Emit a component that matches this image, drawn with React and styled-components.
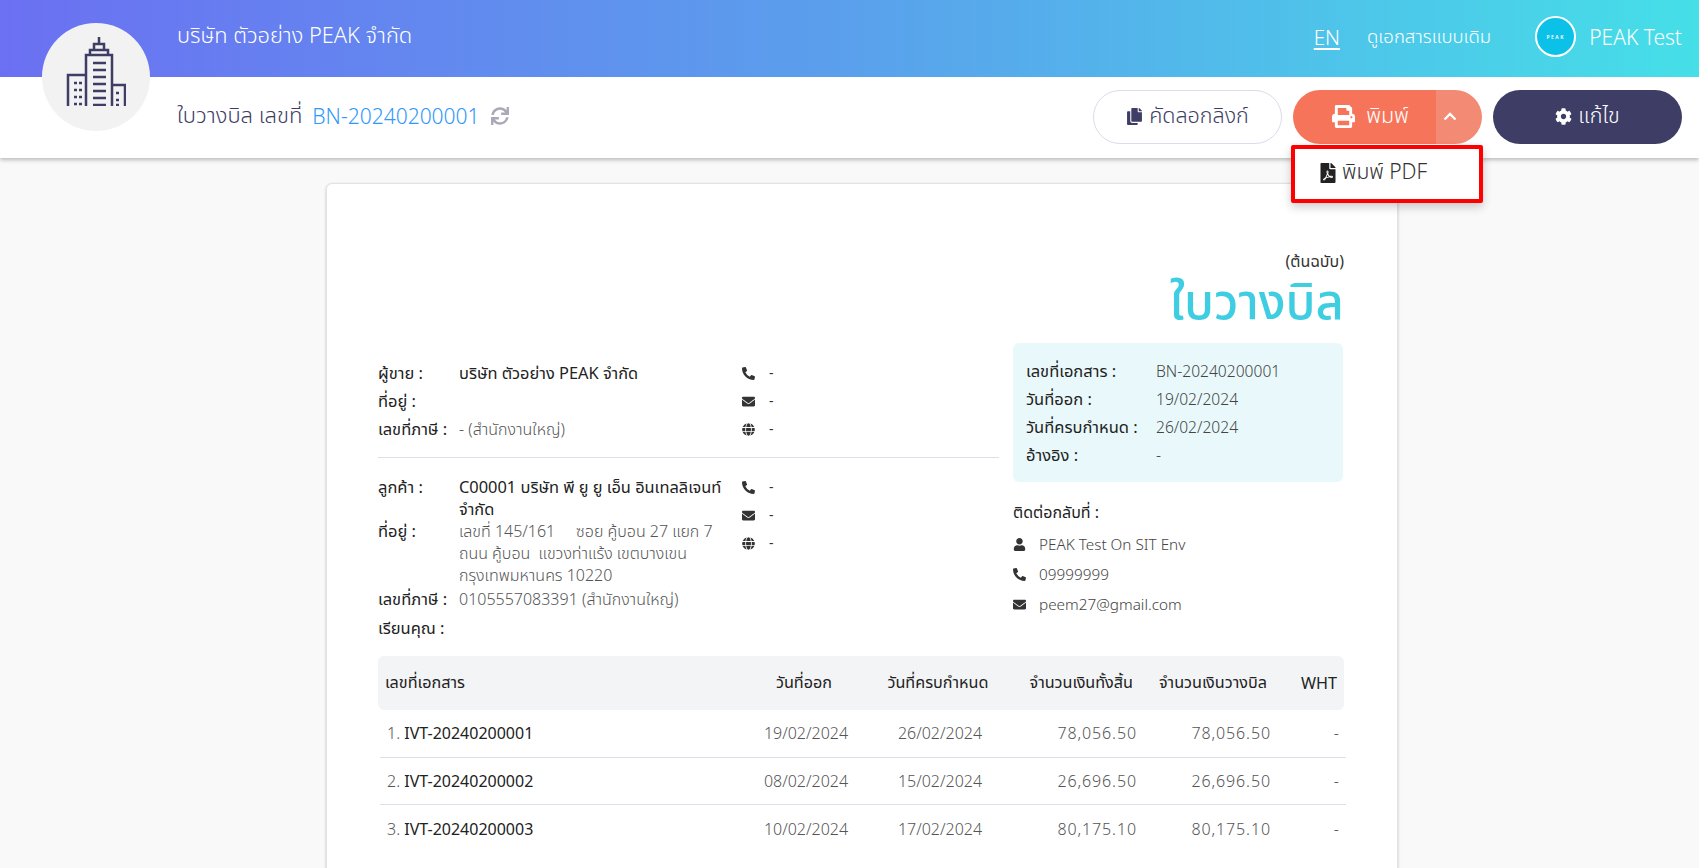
import React from "react";
import styled, { createGlobalStyle } from "styled-components";
import {
  FaCog,
  FaCopy,
  FaEnvelope,
  FaFilePdf,
  FaGlobe,
  FaPhoneAlt,
  FaPrint,
  FaSync,
  FaUser,
} from "react-icons/fa";

const GlobalStyle = createGlobalStyle`
  html, body {
    margin: 0;
    height: 100%;
    overflow: hidden;
    background: #f9f9f9;
    font-family: "Noto Sans", "Noto Sans Thai", "Open Sans", sans-serif;
    font-size: 16px;
    color: #333;
  }
  * { box-sizing: border-box; }
`;

const Page = styled.div`
  height: 868px;
  overflow: hidden;
`;

const Header = styled.header`
  position: relative;
  z-index: 5;
  box-shadow: 0 2px 4px rgba(0, 0, 0, 0.25);
`;

const TopBar = styled.div`
  height: 77px;
  padding: 0 17px 4px 177px;
  display: flex;
  align-items: center;
  color: #fff;
  background: linear-gradient(90deg, #6b70f2 0%, #5aa0ec 50%, #45dfe8 100%);
`;

const CompanyName = styled.div`
  flex: 1;
  font-size: 21.8px;
  font-weight: 300;
`;

const Lang = styled.a`
  font-size: 20.5px;
  font-weight: 300;
  text-decoration: underline;
  text-underline-offset: 3px;
  margin-right: 27px;
`;

const OldDoc = styled.a`
  font-size: 18.5px;
  font-weight: 300;
  margin-right: 44px;
`;

const Avatar = styled.div`
  width: 41px;
  height: 41px;
  border-radius: 50%;
  border: 2px solid #fff;
  background: #0cc1e8;
  display: flex;
  align-items: center;
  justify-content: center;
  font-size: 5px;
  letter-spacing: 1.5px;
  font-weight: 600;
  margin-right: 13px;
`;

const UserName = styled.div`
  font-size: 21px;
  font-weight: 300;
`;

const Logo = styled.div`
  position: absolute;
  left: 42px;
  top: 23px;
  width: 108px;
  height: 108px;
  border-radius: 50%;
  background: #f2f2f2;
  display: flex;
  align-items: center;
  justify-content: center;
  padding-bottom: 11px;
`;

const SubBar = styled.div`
  height: 81px;
  padding: 0 17px 2px 177px;
  display: flex;
  align-items: center;
  gap: 11px;
  background: #fff;
`;

const DocTitle = styled.div`
  flex: 1;
  display: flex;
  align-items: center;
  font-size: 22px;
  font-weight: 300;
  color: #3d3d66;
  padding-bottom: 2px;
`;

const DocNumber = styled.span`
  font-size: 21px;
  color: #2f98fb;
  margin: 0 11px 0 10px;
`;

const RefreshIcon = styled(FaSync)`
  color: #a9a9b8;
  font-size: 18px;
`;

const PillButton = styled.button`
  width: 189px;
  height: 54px;
  border-radius: 27px;
  border: 1px solid ${(p) => (p.$outline ? "#dcdcea" : "transparent")};
  background: ${(p) => (p.$outline ? "#fff" : "#3d3d66")};
  color: ${(p) => (p.$outline ? "#3d3d66" : "#fff")};
  font: inherit;
  font-size: 21.5px;
  font-weight: 300;
  display: flex;
  align-items: center;
  justify-content: center;
  gap: 6px;
  padding: 0;
`;

const PrintWrap = styled.div`
  position: relative;
  width: 189px;
  height: 54px;
  display: flex;
  border-radius: 27px;
  color: #fff;
  font-size: 21.5px;
  font-weight: 300;
`;

const PrintMain = styled.div`
  flex: 1;
  display: flex;
  align-items: center;
  justify-content: center;
  gap: 11px;
  background: #f6755a;
  border-radius: 27px 0 0 27px;
  padding-left: 12px;
`;

const PrintToggle = styled.div`
  width: 46px;
  display: flex;
  align-items: center;
  justify-content: center;
  background: #f38a74;
  border-radius: 0 27px 27px 0;
  padding-right: 23px;
  padding-left: 4px;
`;

const Dropdown = styled.div`
  position: absolute;
  left: -2px;
  top: 55px;
  width: 192px;
  height: 58px;
  border: 4px solid #f00;
  border-radius: 2px;
  background: #fff;
  box-shadow: 0 4px 10px rgba(0, 0, 0, 0.2);
  color: #333;
  font-size: 21px;
  display: flex;
  align-items: center;
  gap: 4px;
  padding: 0 0 2px 23px;
`;

const Card = styled.main`
  width: 1072px;
  margin: 25px 0 0 326px;
  padding: 0 53px 60px 51px;
  background: #fff;
  border: 1px solid #e2e2e2;
  border-radius: 6px;
  box-shadow: 0 1px 3px rgba(0, 0, 0, 0.2);
`;

const DocHead = styled.div`
  height: 159px;
  padding-top: 67px;
  text-align: right;
`;

const Original = styled.div`
  font-size: 16px;
  line-height: 20px;
`;

const BigTitle = styled.div`
  font-size: 49px;
  line-height: 58px;
  color: #3fcde2;
  font-weight: 500;
`;

const Columns = styled.div`
  display: flex;
  gap: 14px;
`;

const LeftCol = styled.div`
  width: 621px;
  padding-top: 19px;
`;

const RightCol = styled.div`
  width: 330px;
`;

const PartyBlock = styled.div`
  display: flex;
`;

const PartyInfo = styled.div`
  width: 364px;
  padding-right: 4px;
`;

const Row = styled.div`
  display: flex;
  min-height: 28px;
  line-height: 22px;
  margin-bottom: ${(p) => p.$after || 0}px;
`;

const Label = styled.div`
  flex: none;
  width: 81px;
  font-size: 16.5px;
  color: #222;
`;

const Value = styled.div`
  font-size: ${(p) => (p.$strong ? "16.4px" : "16px")};
  font-weight: ${(p) => (p.$strong ? 400 : 300)};
  color: ${(p) => (p.$strong ? "#222" : "#555")};
`;

const ContactItem = styled.div`
  display: flex;
  align-items: flex-start;
  height: 28px;
  line-height: 22px;
  font-size: 14px;
  svg {
    width: 13px;
    height: 13px;
    margin: 5px 14px 0 0;
    color: #333;
  }
`;

const Divider = styled.hr`
  border: 0;
  border-top: 1px solid #dedee8;
  margin: 11px 0 18px;
`;

const InfoBox = styled.div`
  height: 139px;
  padding: 14px 13px;
  border-radius: 6px;
  background: #e9f9fb;
`;

const InfoRow = styled.div`
  display: flex;
  height: 28px;
  line-height: 28px;
  font-size: 16.5px;
`;

const InfoLabel = styled.div`
  width: 130px;
  color: #222;
`;

const InfoValue = styled.div`
  font-size: 15.6px;
  font-weight: 300;
  color: #444;
`;

const ContactHeading = styled.div`
  margin: 19px 0 6px;
  line-height: 22px;
  font-size: 16px;
  color: #222;
`;

const PersonRow = styled.div`
  display: flex;
  align-items: center;
  height: 30px;
  font-size: 15.3px;
  font-weight: 300;
  color: #444;
  svg {
    width: 13px;
    height: 13px;
    margin-right: 13px;
    color: #333;
  }
`;

const TableGrid = styled.div`
  display: grid;
  grid-template-columns: 366px 120px 148px 125px 134px 70px;
  align-items: center;
`;

const TableHead = styled(TableGrid)`
  height: 54px;
  margin-top: 11px;
  border-radius: 6px;
  background: #f3f4f6;
  font-size: 16.2px;
  color: #222;
`;

const TableRow = styled(TableGrid)`
  height: 47.5px;
  margin: 0 -2px 0 2px;
  font-size: 16px;
  font-weight: 300;
  color: #555;
  border-bottom: ${(p) => (p.$last ? "0" : "1px solid #dedee8")};
`;

const Cell = styled.div`
  text-align: ${(p) => p.$align || "left"};
  white-space: nowrap;
  padding-right: ${(p) => (p.$align === "right" ? "4px" : "0")};
`;

const MoneyCell = styled(Cell)`
  text-align: right;
  letter-spacing: 0.9px;
  padding-right: 2px;
`;

const DocCell = styled(Cell)`
  padding-left: 7px;
`;

const DocCode = styled.span`
  color: #222;
  font-weight: 400;
`;

const BuildingIcon = () => (
  <svg width="60" height="69" viewBox="0 0 60 69" fill="none" stroke="#3d3d66" strokeWidth="2.5">
    <path d="M33 0v7M28 13V7h10v6M24 18v-5h18v5M20 69V18h26v51" />
    <path d="M27 26h13M27 33h13M27 40h13M27 47h13M27 54h13M27 61h13M27 68h13" />
    <path d="M20 38H2v31M46 48h13v21" />
    <path d="M8 46h3M13 46h3M8 53h3M13 53h3M8 60h3M13 60h3M8 67h3M13 67h3M50 56h3M50 63h3M50 68h3" />
  </svg>
);

const ContactIcons = () => (
  <div>
    <ContactItem><FaPhoneAlt />-</ContactItem>
    <ContactItem><FaEnvelope />-</ContactItem>
    <ContactItem><FaGlobe />-</ContactItem>
  </div>
);

const invoices = [
  ["1.", "IVT-20240200001", "19/02/2024", "26/02/2024", "78,056.50"],
  ["2.", "IVT-20240200002", "08/02/2024", "15/02/2024", "26,696.50"],
  ["3.", "IVT-20240200003", "10/02/2024", "17/02/2024", "80,175.10"],
];

const App = () => (
  <Page>
    <GlobalStyle />
    <Header>
      <TopBar>
        <CompanyName>บริษัท ตัวอย่าง PEAK จำกัด</CompanyName>
        <Lang>EN</Lang>
        <OldDoc>ดูเอกสารแบบเดิม</OldDoc>
        <Avatar>PEAK</Avatar>
        <UserName>PEAK Test</UserName>
      </TopBar>
      <SubBar>
        <DocTitle>
          ใบวางบิล เลขที่
          <DocNumber>BN-20240200001</DocNumber>
          <RefreshIcon />
        </DocTitle>
        <PillButton $outline>
          <FaCopy size={17} />
          คัดลอกลิงก์
        </PillButton>
        <PrintWrap>
          <PrintMain>
            <FaPrint size={23} />
            พิมพ์
          </PrintMain>
          <PrintToggle>
            <svg width="14" height="9" viewBox="0 0 14 9" fill="none" stroke="#fff" strokeWidth="2.4">
              <path d="M1.5 7.5 7 2l5.5 5.5" />
            </svg>
          </PrintToggle>
          <Dropdown>
            <FaFilePdf size={20} color="#222" />
            พิมพ์ PDF
          </Dropdown>
        </PrintWrap>
        <PillButton>
          <FaCog size={17} />
          แก้ไข
        </PillButton>
      </SubBar>
      <Logo>
        <BuildingIcon />
      </Logo>
    </Header>

    <Card>
      <DocHead>
        <Original>(ต้นฉบับ)</Original>
        <BigTitle>ใบวางบิล</BigTitle>
      </DocHead>
      <Columns>
        <LeftCol>
          <PartyBlock>
            <PartyInfo>
              <Row><Label>ผู้ขาย :</Label><Value $strong>บริษัท ตัวอย่าง PEAK จำกัด</Value></Row>
              <Row><Label>ที่อยู่ :</Label><Value /></Row>
              <Row><Label>เลขที่ภาษี :</Label><Value>- (สำนักงานใหญ่)</Value></Row>
            </PartyInfo>
            <ContactIcons />
          </PartyBlock>
          <Divider />
          <PartyBlock>
            <PartyInfo>
              <Row><Label>ลูกค้า :</Label><Value $strong>C00001 บริษัท พี ยู ยู เอ็น อินเทลลิเจนท์ จำกัด</Value></Row>
              <Row $after={2}><Label>ที่อยู่ :</Label><Value>เลขที่ 145/161 &nbsp;&nbsp;&nbsp; ซอย คู้บอน 27 แยก 7<br />ถนน คู้บอน &nbsp;แขวงท่าแร้ง เขตบางเขน<br />กรุงเทพมหานคร 10220</Value></Row>
              <Row $after={1}><Label>เลขที่ภาษี :</Label><Value>0105557083391 (สำนักงานใหญ่)</Value></Row>
              <Row><Label>เรียนคุณ :</Label></Row>
            </PartyInfo>
            <ContactIcons />
          </PartyBlock>
        </LeftCol>
        <RightCol>
          <InfoBox>
            <InfoRow><InfoLabel>เลขที่เอกสาร :</InfoLabel><InfoValue>BN-20240200001</InfoValue></InfoRow>
            <InfoRow><InfoLabel>วันที่ออก :</InfoLabel><InfoValue>19/02/2024</InfoValue></InfoRow>
            <InfoRow><InfoLabel>วันที่ครบกำหนด :</InfoLabel><InfoValue>26/02/2024</InfoValue></InfoRow>
            <InfoRow><InfoLabel>อ้างอิง :</InfoLabel><InfoValue>-</InfoValue></InfoRow>
          </InfoBox>
          <ContactHeading>ติดต่อกลับที่ :</ContactHeading>
          <PersonRow><FaUser />PEAK Test On SIT Env</PersonRow>
          <PersonRow><FaPhoneAlt />09999999</PersonRow>
          <PersonRow><FaEnvelope />peem27@gmail.com</PersonRow>
        </RightCol>
      </Columns>
      <TableHead>
        <DocCell>เลขที่เอกสาร</DocCell>
        <Cell $align="center">วันที่ออก</Cell>
        <Cell $align="center">วันที่ครบกำหนด</Cell>
        <Cell $align="right">จำนวนเงินทั้งสิ้น</Cell>
        <Cell $align="right">จำนวนเงินวางบิล</Cell>
        <Cell $align="right">WHT</Cell>
      </TableHead>
      {invoices.map((row, i) => (
        <TableRow key={row[1]} $last={i === invoices.length - 1}>
          <DocCell>{row[0]} <DocCode>{row[1]}</DocCode></DocCell>
          <Cell $align="center">{row[2]}</Cell>
          <Cell $align="center">{row[3]}</Cell>
          <MoneyCell>{row[4]}</MoneyCell>
          <MoneyCell>{row[4]}</MoneyCell>
          <Cell $align="right">-</Cell>
        </TableRow>
      ))}
    </Card>
  </Page>
);

export default App;
